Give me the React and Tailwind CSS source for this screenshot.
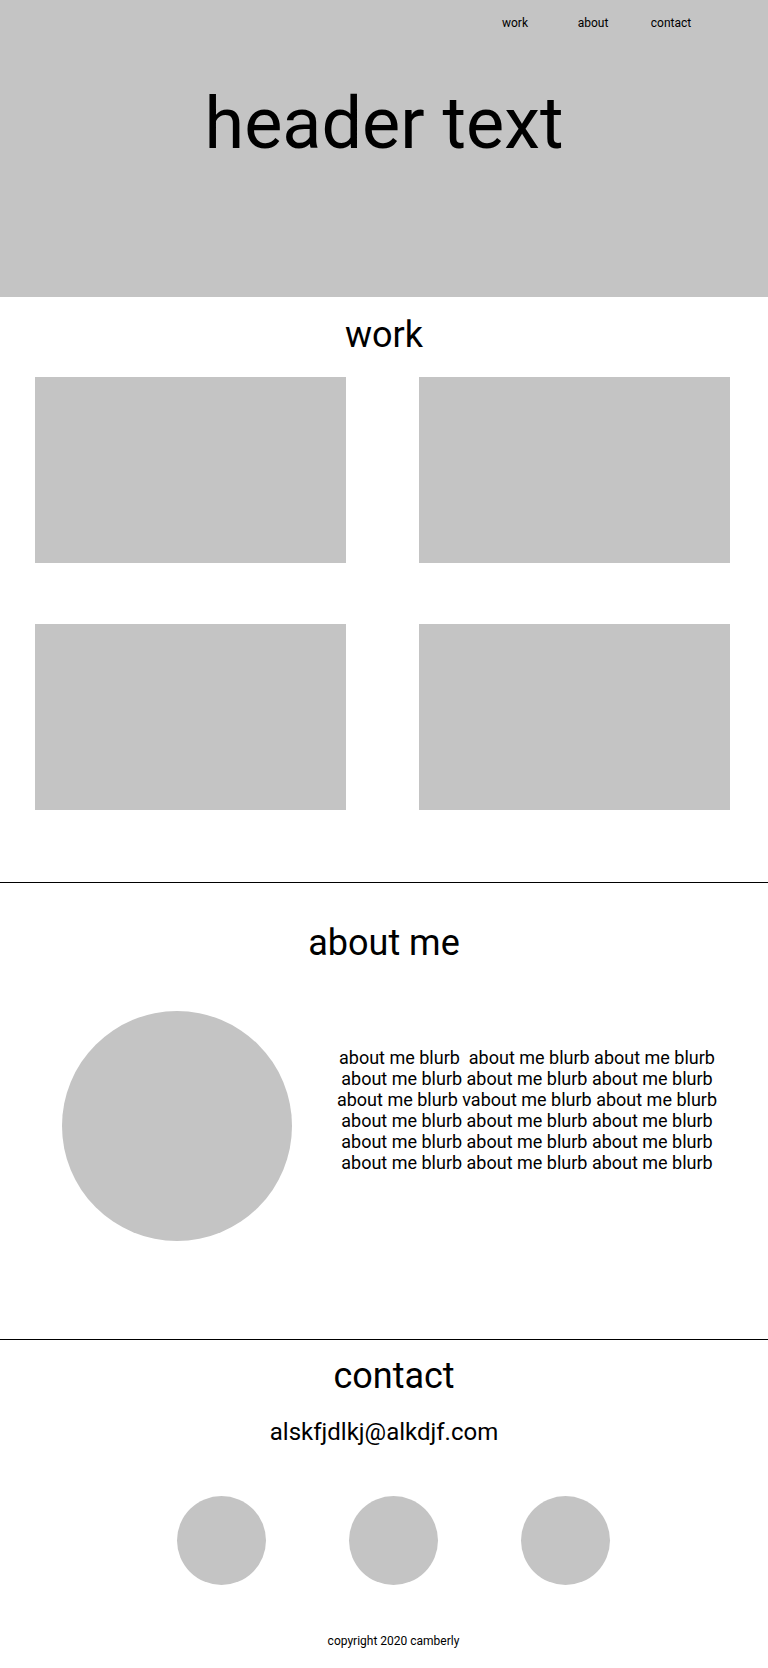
export default function App() {
  return (
    <div className="w-[768px] bg-white text-black font-['Roboto',sans-serif]">
      <header className="h-[297px] bg-[#c4c4c4] flex flex-col">
        <nav className="flex justify-end pr-[58px] pt-[16px] text-[12px] leading-[14px]">
          <a className="w-[78px] text-center">work</a>
          <a className="w-[78px] text-center">about</a>
          <a className="w-[78px] text-center">contact</a>
        </nav>
        <h1 className="mt-[52px] text-center text-[72px] leading-[84px] font-normal">header text</h1>
      </header>

      <section className="pt-[17px] pb-[72px] border-b border-black">
        <h2 className="text-center text-[36px] leading-[42px]">work</h2>
        <div className="mt-[21px] pl-[35px] grid grid-cols-[311px_311px] gap-x-[73px] gap-y-[61px]">
          <div className="h-[186px] bg-[#c4c4c4]"></div>
          <div className="h-[186px] bg-[#c4c4c4]"></div>
          <div className="h-[186px] bg-[#c4c4c4]"></div>
          <div className="h-[186px] bg-[#c4c4c4]"></div>
        </div>
      </section>

      <section className="pt-[39px] pb-[98px] border-b border-black">
        <h2 className="text-center text-[36px] leading-[42px]">about me</h2>
        <div className="mt-[47px] flex items-start">
          <div className="ml-[62px] w-[230px] h-[230px] rounded-full bg-[#c4c4c4] shrink-0"></div>
          <p className="ml-[35px] mt-[36px] w-[400px] whitespace-nowrap text-center text-[18px] leading-[21px]">
            about me blurb{"\u00a0"} about me blurb about me blurb<br />
            about me blurb about me blurb about me blurb<br />
            about me blurb vabout me blurb about me blurb<br />
            about me blurb about me blurb about me blurb<br />
            about me blurb about me blurb about me blurb<br />
            about me blurb about me blurb about me blurb
          </p>
        </div>
      </section>

      <section className="pt-[15px] pb-[20px]">
        <h2 className="pl-[20px] text-center text-[36px] leading-[42px]">contact</h2>
        <p className="mt-[21px] text-center text-[24px] leading-[28px]">alskfjdlkj@alkdjf.com</p>
        <div className="mt-[50px] pl-[18px] flex justify-center gap-[83px]">
          <div className="w-[89px] h-[89px] rounded-full bg-[#c4c4c4]"></div>
          <div className="w-[89px] h-[89px] rounded-full bg-[#c4c4c4]"></div>
          <div className="w-[89px] h-[89px] rounded-full bg-[#c4c4c4]"></div>
        </div>
        <p className="mt-[49px] pl-[19px] text-center text-[12px] leading-[14px]">copyright 2020 camberly</p>
      </section>
    </div>
  );
}
